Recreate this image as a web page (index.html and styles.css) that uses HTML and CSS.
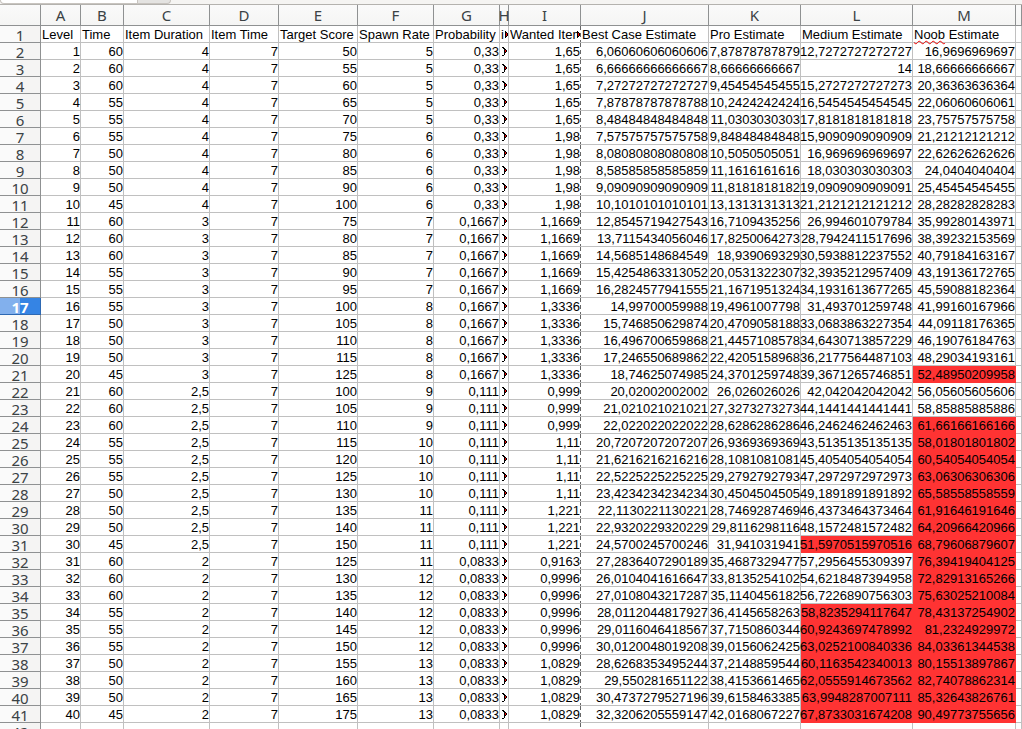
FILE: index.html
```
<!DOCTYPE html>
<html lang="en">
<head>
<meta charset="utf-8">
<title>Level estimates</title>
<link rel="stylesheet" href="styles.css">
</head>
<body>
<div class="formula-bar"><span class="formula-input"></span><span class="formula-button"></span></div>
<table class="sheet">
<colgroup>
<col class="w-head"><col class="w-a"><col class="w-b"><col class="w-c"><col class="w-d"><col class="w-e"><col class="w-f"><col class="w-g"><col class="w-h"><col class="w-i"><col class="w-j"><col class="w-k"><col class="w-l"><col class="w-m"><col>
</colgroup>
<thead><tr><th class="corner"></th><th scope="col">A</th><th scope="col">B</th><th scope="col">C</th><th scope="col">D</th><th scope="col">E</th><th scope="col">F</th><th scope="col">G</th><th scope="col" class="narrow"><span>H</span></th><th scope="col">I</th><th scope="col">J</th><th scope="col">K</th><th scope="col">L</th><th scope="col">M</th><th></th></tr></thead>
<tbody id="rows"></tbody>
</table>
<script src="sheet.js"></script>
</body>
</html>
```
FILE: styles.css
```
* { box-sizing: border-box; }
body {
  margin: 0;
  overflow: hidden;
  background: #fff;
  color: #000;
  font: 13px/15px "Liberation Sans", Arial, sans-serif;
}
.formula-bar {
  display: flex;
  height: 5px;
  background: #f5f4f2;
  border-bottom: 1px solid #b4b2ae;
}
.formula-input, .formula-button {
  height: 4px;
  border: 1px solid #c8c4bf;
  border-top: 0;
}
.formula-input { width: 138px; background: #fff; border-radius: 0 0 0 4px; }
.formula-button { width: 33px; background: #e4e3e1; border-left: 0; border-radius: 0 0 4px 0; }
.sheet {
  width: 100%;
  min-width: 1022px;
  table-layout: fixed;
  border-collapse: separate;
  border-spacing: 0;
}
.w-head { width: 41px; }
.w-a { width: 40px; }
.w-b { width: 43px; }
.w-c { width: 86px; }
.w-d { width: 69px; }
.w-e { width: 79px; }
.w-f { width: 76px; }
.w-g { width: 66px; }
.w-h { width: 9px; }
.w-i { width: 72px; }
.w-j { width: 128px; }
.w-k { width: 92px; }
.w-l { width: 112px; }
.w-m { width: 103px; }
th {
  padding: 0;
  border: solid #8f9192;
  border-width: 0 1px 1px 0;
  background: #f6f5f4;
  color: #3b4245;
  font: 15px/20px "Noto Sans", "Open Sans", sans-serif;
  text-align: center;
}
thead th { background: linear-gradient(#fafafa, #f5f5f4); }
.narrow span { display: flex; justify-content: center; }
tbody th {
  padding-top: 2px;
  line-height: 14px;
  background: linear-gradient(90deg, #fafafa 50%, #f5f4f3 50%);
}
tbody .active {
  border-color: #2d68b2;
  background: linear-gradient(90deg, #82b0ed 50%, #3584e4 50%);
  color: #fff;
  font-weight: bold;
}
td {
  height: 17px;
  padding: 1px 0 0;
  border: solid #c0c0c0;
  border-width: 0 1px 1px 0;
  white-space: nowrap;
}
.value { display: flex; justify-content: flex-end; }
.label { display: flex; align-items: center; padding-left: 1px; }
.high { background: #f33; border-color: #f33; }
.page-break {
  padding-right: 1px;
  border-right: 0;
  background: repeating-linear-gradient(#666 0 4px, #fff 4px 7px) right / 1px 100% no-repeat;
}
.clipped svg { display: block; flex: none; }
.clipped-number { padding-left: 2px; height: 15px; }
.cut { flex: 1; min-width: 0; overflow: hidden; }
.spell { text-decoration: underline wavy #e00 1px; text-underline-offset: 1px; }
```
FILE: sheet.js
```
const data = `Level|Time|Item Duration|Item Time|Target Score|Spawn Rate|Probability|i|Wanted Items|Best Case Estimate|Pro Estimate|Medium Estimate|Noob Estimate
1|60|4|7|50|5|0,33||1,65|6,06060606060606|7,87878787879|12,7272727272727|16,9696969697
2|60|4|7|55|5|0,33||1,65|6,66666666666667|8,66666666667|14|18,66666666667
3|60|4|7|60|5|0,33||1,65|7,27272727272727|9,45454545455|15,2727272727273|20,36363636364
4|55|4|7|65|5|0,33||1,65|7,87878787878788|10,2424242424|16,5454545454545|22,06060606061
5|55|4|7|70|5|0,33||1,65|8,48484848484848|11,0303030303|17,8181818181818|23,75757575758
6|55|4|7|75|6|0,33||1,98|7,57575757575758|9,84848484848|15,9090909090909|21,21212121212
7|50|4|7|80|6|0,33||1,98|8,08080808080808|10,5050505051|16,969696969697|22,62626262626
8|50|4|7|85|6|0,33||1,98|8,58585858585859|11,1616161616|18,030303030303|24,0404040404
9|50|4|7|90|6|0,33||1,98|9,09090909090909|11,8181818182|19,0909090909091|25,45454545455
10|45|4|7|100|6|0,33||1,98|10,1010101010101|13,1313131313|21,2121212121212|28,28282828283
11|60|3|7|75|7|0,1667||1,1669|12,8545719427543|16,7109435256|26,994601079784|35,99280143971
12|60|3|7|80|7|0,1667||1,1669|13,7115434056046|17,8250064273|28,7942411517696|38,39232153569
13|60|3|7|85|7|0,1667||1,1669|14,5685148684549|18,939069329|30,5938812237552|40,79184163167
14|55|3|7|90|7|0,1667||1,1669|15,4254863313052|20,0531322307|32,3935212957409|43,19136172765
15|55|3|7|95|7|0,1667||1,1669|16,2824577941555|21,1671951324|34,1931613677265|45,59088182364
16|55|3|7|100|8|0,1667||1,3336|14,99700059988|19,4961007798|31,493701259748|41,99160167966
17|50|3|7|105|8|0,1667||1,3336|15,746850629874|20,4709058188|33,0683863227354|44,09118176365
18|50|3|7|110|8|0,1667||1,3336|16,496700659868|21,4457108578|34,6430713857229|46,19076184763
19|50|3|7|115|8|0,1667||1,3336|17,246550689862|22,4205158968|36,2177564487103|48,29034193161
20|45|3|7|125|8|0,1667||1,3336|18,74625074985|24,3701259748|39,3671265746851|!52,48950209958
21|60|2,5|7|100|9|0,111||0,999|20,02002002002|26,026026026|42,042042042042|56,05605605606
22|60|2,5|7|105|9|0,111||0,999|21,021021021021|27,3273273273|44,1441441441441|58,85885885886
23|60|2,5|7|110|9|0,111||0,999|22,022022022022|28,6286286286|46,2462462462463|!61,66166166166
24|55|2,5|7|115|10|0,111||1,11|20,7207207207207|26,9369369369|43,5135135135135|!58,01801801802
25|55|2,5|7|120|10|0,111||1,11|21,6216216216216|28,1081081081|45,4054054054054|!60,54054054054
26|55|2,5|7|125|10|0,111||1,11|22,5225225225225|29,2792792793|47,2972972972973|!63,06306306306
27|50|2,5|7|130|10|0,111||1,11|23,4234234234234|30,4504504505|49,1891891891892|!65,58558558559
28|50|2,5|7|135|11|0,111||1,221|22,1130221130221|28,7469287469|46,4373464373464|!61,91646191646
29|50|2,5|7|140|11|0,111||1,221|22,9320229320229|29,8116298116|48,1572481572482|!64,20966420966
30|45|2,5|7|150|11|0,111||1,221|24,5700245700246|31,941031941|!51,5970515970516|!68,79606879607
31|60|2|7|125|11|0,0833||0,9163|27,2836407290189|35,4687329477|57,2956455309397|!76,39419404125
32|60|2|7|130|12|0,0833||0,9996|26,0104041616647|33,8135254102|54,6218487394958|!72,82913165266
33|60|2|7|135|12|0,0833||0,9996|27,0108043217287|35,1140456182|56,7226890756303|!75,63025210084
34|55|2|7|140|12|0,0833||0,9996|28,0112044817927|36,4145658263|!58,8235294117647|!78,43137254902
35|55|2|7|145|12|0,0833||0,9996|29,0116046418567|37,7150860344|!60,9243697478992|!81,2324929972
36|55|2|7|150|12|0,0833||0,9996|30,0120048019208|39,0156062425|!63,0252100840336|!84,03361344538
37|50|2|7|155|13|0,0833||1,0829|28,6268353495244|37,2148859544|!60,1163542340013|!80,15513897867
38|50|2|7|160|13|0,0833||1,0829|29,550281651122|38,4153661465|!62,0555914673562|!82,74078862314
39|50|2|7|165|13|0,0833||1,0829|30,4737279527196|39,6158463385|!63,9948287007111|!85,32643826761
40|45|2|7|175|13|0,0833||1,0829|32,3206205559147|42,0168067227|!67,8733031674208|!90,49773755656
||||||||||||`;

const arrow = '<svg width="3" height="7" viewBox="0 0 3 7" shape-rendering="crispEdges"><path d="M0 0h1v1h1v1h1v3h-1v1h-1v1h-1z"/><path fill="#e00" d="M1 2h1v3h-1z"/></svg>';
const clippedNumber = '<svg width="5" height="9" viewBox="0 0 5 9" shape-rendering="crispEdges"><path d="M0 0h2v1h1v1h1v1h1v2h-1v1h-1v2h-1v-6h-1v-1h-1zM0 8h2v1h-2z"/><path fill="#e00" d="M3 3h1v2h-1z"/></svg>';

function cell(text, row, col) {
  const classes = [];
  let body = text.replace('!', '');
  let kind = row === 0 || col === 7 ? 'label' : 'value';
  if (text.startsWith('!')) classes.push('high');
  if (col === 8) classes.push('page-break');
  if (col === 7) classes.push('clipped');
  if (row === 0) {
    if (col === 12) body = '<span><span class="spell">Noob</span> Estimate</span>';
    if (col === 7 || col === 8) body = `<span class="cut">${body}</span>${arrow}`;
  } else if (col === 7 && row < 41) {
    body = clippedNumber;
    kind += ' clipped-number';
  }
  return `<td class="${classes.join(' ')}"><div class="${kind}">${body}</div></td>`;
}

document.getElementById('rows').innerHTML = data.split('\n').map((line, row) => {
  const active = row === 16 ? ' class="active"' : '';
  const cells = line.split('|').map((text, col) => cell(text, row, col)).join('');
  return `<tr><th scope="row"${active}>${row + 1}</th>${cells}<td></td></tr>`;
}).join('');
```
